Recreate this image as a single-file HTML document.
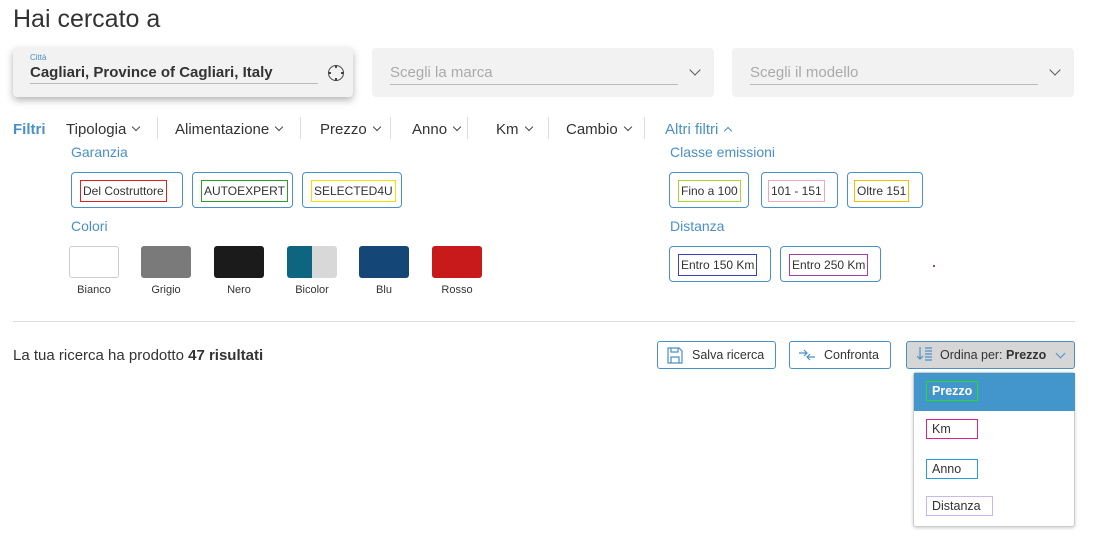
<!DOCTYPE html>
<html><head><meta charset="utf-8"><style>
*{margin:0;padding:0;box-sizing:border-box}
body{width:1096px;height:552px;background:#fff;font-family:"Liberation Sans",sans-serif;color:#333;position:relative;overflow:hidden}
.a{position:absolute;white-space:nowrap}
.box{position:absolute;background:#f2f2f2;border-radius:4px}
.ph{position:absolute;font-size:15px;color:#aaa;border-bottom:1px solid #bbb;padding-bottom:3px}
.chev{position:absolute;width:8px;height:8px;border-right:1.5px solid #555;border-bottom:1.5px solid #555;transform:rotate(45deg)}
.f{position:absolute;top:121px;font-size:15px;color:#333}
.f i{display:inline-block;width:6px;height:6px;border-right:1.3px solid #444;border-bottom:1.3px solid #444;transform:rotate(45deg);margin-left:7px;position:relative;top:-4px}
.sep{position:absolute;top:117px;width:1px;height:22px;background:#ddd}
.lab{position:absolute;font-size:14px;color:#4a90c8}
.chip{position:absolute;height:36px;border:1px solid #4a90c8;border-radius:4px;top:172px}
.chip span{position:absolute;left:8px;top:7px;height:22px;font-size:12px;line-height:20px;padding:0 2px;color:#333;border:1px solid}
.sw{position:absolute;top:246px;width:50px;height:32px;border-radius:3px}
.swl{position:absolute;top:284px;font-size:11px;color:#333;width:80px;text-align:center}
.btn{position:absolute;top:341px;height:28px;border:1px solid #4a90c8;border-radius:3px;font-size:12.5px;line-height:26px;color:#333}
.dd span{position:absolute;left:12px;font-size:12.5px;line-height:18px;padding:0 5px;border:1px solid;width:52px;color:#333}
</style></head><body>
<div class="a" style="left:13px;top:5px;font-size:25px;color:#333">Hai cercato a</div>

<div class="box" style="left:13px;top:48px;width:340px;height:49px;box-shadow:0 3px 8px rgba(0,0,0,.3)"></div>
<div class="a" style="left:30px;top:53px;font-size:8px;color:#4a90c8">Città</div>
<div class="a" style="left:30px;top:64px;width:288px;font-size:15px;font-weight:bold;color:#333;border-bottom:1px solid #bbb;padding-bottom:2px">Cagliari, Province of Cagliari, Italy</div>
<div class="a" style="left:328px;top:65px;width:16px;height:16px;border:1.5px solid #444;border-radius:50%"></div>
<div class="a" style="left:335px;top:65px;width:1.5px;height:3px;background:#444"></div>
<div class="a" style="left:335px;top:78px;width:1.5px;height:3px;background:#444"></div>
<div class="a" style="left:328px;top:72px;width:3px;height:1.5px;background:#444"></div>
<div class="a" style="left:341px;top:72px;width:3px;height:1.5px;background:#444"></div>

<div class="box" style="left:372px;top:48px;width:342px;height:49px"></div>
<div class="ph" style="left:390px;top:64px;width:288px">Scegli la marca</div>
<div class="chev" style="left:691px;top:66px"></div>
<div class="box" style="left:732px;top:48px;width:342px;height:49px"></div>
<div class="ph" style="left:750px;top:64px;width:288px">Scegli il modello</div>
<div class="chev" style="left:1051px;top:66px"></div>

<div class="f" style="left:13px;font-weight:bold;color:#4a90c8">Filtri</div>
<div class="f" style="left:66px">Tipologia<i></i></div>
<div class="sep" style="left:157px"></div>
<div class="f" style="left:175px">Alimentazione<i></i></div>
<div class="sep" style="left:300px"></div>
<div class="f" style="left:320px">Prezzo<i></i></div>
<div class="sep" style="left:390px"></div>
<div class="f" style="left:412px">Anno<i></i></div>
<div class="sep" style="left:467px"></div>
<div class="f" style="left:496px">Km<i></i></div>
<div class="sep" style="left:548px"></div>
<div class="f" style="left:566px">Cambio<i></i></div>
<div class="sep" style="left:644px"></div>
<div class="f" style="left:665px;color:#4a90c8">Altri filtri<i style="transform:rotate(225deg);top:0;border-color:#4a90c8"></i></div>

<div class="lab" style="left:71px;top:144px">Garanzia</div>
<div class="chip" style="left:71px;width:112px"><span style="border-color:#e02020">Del Costruttore</span></div>
<div class="chip" style="left:192px;width:101px"><span style="border-color:#2aa02a">AUTOEXPERT</span></div>
<div class="chip" style="left:302px;width:100px"><span style="border-color:#f0e000">SELECTED4U</span></div>

<div class="lab" style="left:670px;top:144px">Classe emissioni</div>
<div class="chip" style="left:669px;width:80px"><span style="border-color:#a8d830">Fino a 100</span></div>
<div class="chip" style="left:761px;width:77px"><span style="border-color:#f0a8c0;left:6px">101 - 151</span></div>
<div class="chip" style="left:847px;width:76px"><span style="border-color:#f0c000;left:6px">Oltre 151</span></div>

<div class="lab" style="left:71px;top:218px">Colori</div>
<div class="sw" style="left:69px;border:1px solid #ccc;background:#fff"></div>
<div class="sw" style="left:141px;background:#7a7a7a"></div>
<div class="sw" style="left:214px;background:#1b1b1b"></div>
<div class="sw" style="left:287px;background:linear-gradient(90deg,#0e6580 50%,#d8d8d8 50%)"></div>
<div class="sw" style="left:359px;background:#144677"></div>
<div class="sw" style="left:432px;background:#c8191b"></div>
<div class="swl" style="left:54px">Bianco</div>
<div class="swl" style="left:126px">Grigio</div>
<div class="swl" style="left:199px">Nero</div>
<div class="swl" style="left:272px">Bicolor</div>
<div class="swl" style="left:344px">Blu</div>
<div class="swl" style="left:417px">Rosso</div>

<div class="lab" style="left:670px;top:218px">Distanza</div>
<div class="chip" style="left:669px;top:246px;width:102px"><span style="border-color:#3a40c0">Entro 150 Km</span></div>
<div class="chip" style="left:780px;top:246px;width:101px"><span style="border-color:#a040a0">Entro 250 Km</span></div>
<div class="a" style="left:933px;top:265px;width:2px;height:2px;background:#8a4a9a"></div>

<div class="a" style="left:13px;top:321px;width:1062px;height:1px;background:#ddd"></div>
<div class="a" style="left:13px;top:347px;font-size:15px;color:#333">La tua ricerca ha prodotto <b>47 risultati</b></div>

<div class="btn" style="left:657px;width:119px">
<svg style="position:absolute;left:9px;top:5px" width="16" height="17" viewBox="0 0 16 17" fill="none" stroke="#4a90c8" stroke-width="1.2"><path d="M1 1h11l3 3v12H1z"/><path d="M4 1v4h7V1M4 16v-6h8v6"/></svg>
<span style="position:absolute;left:34px">Salva ricerca</span></div>
<div class="btn" style="left:789px;width:102px">
<svg style="position:absolute;left:9px;top:7px" width="16" height="12" viewBox="0 0 16 12" fill="none" stroke="#4a90c8" stroke-width="1.2"><path d="M0 4h8M5 1l3 3-3 3M16 8H8M11 5l-3 3 3 3"/></svg>
<span style="position:absolute;left:34px">Confronta</span></div>
<div class="btn" style="left:906px;width:169px;background:#d6d6d6">
<svg style="position:absolute;left:10px;top:5px" width="16" height="14" viewBox="0 0 16 14" fill="none" stroke="#4a90c8" stroke-width="1.2"><path d="M3 0v12M0 9l3 3 3-3M8 1h7M8 4h7M8 7h7M8 10h7M8 13h7"/></svg>
<span style="position:absolute;left:33px">Ordina per: <b>Prezzo</b></span>
<i style="position:absolute;left:150px;top:8px;width:7px;height:7px;border-right:1.3px solid #4a90c8;border-bottom:1.3px solid #4a90c8;transform:rotate(45deg)"></i></div>

<div class="a dd" style="left:913px;top:372px;width:162px;height:155px;border:1px solid #ccc;border-radius:3px;box-shadow:0 1px 3px rgba(0,0,0,.2)">
<div style="position:absolute;left:0;top:0;width:161px;height:38px;background:#4396cc"></div>
<span style="top:8px;border-color:#20e020;color:#fff;font-weight:bold;width:52px">Prezzo</span>
<span style="top:46px;border-color:#e0208a">Km</span>
<span style="top:86px;border-color:#20a0e0">Anno</span>
<span style="top:123px;border-color:#c8b8e8;width:67px">Distanza</span>
</div>
</body></html>
